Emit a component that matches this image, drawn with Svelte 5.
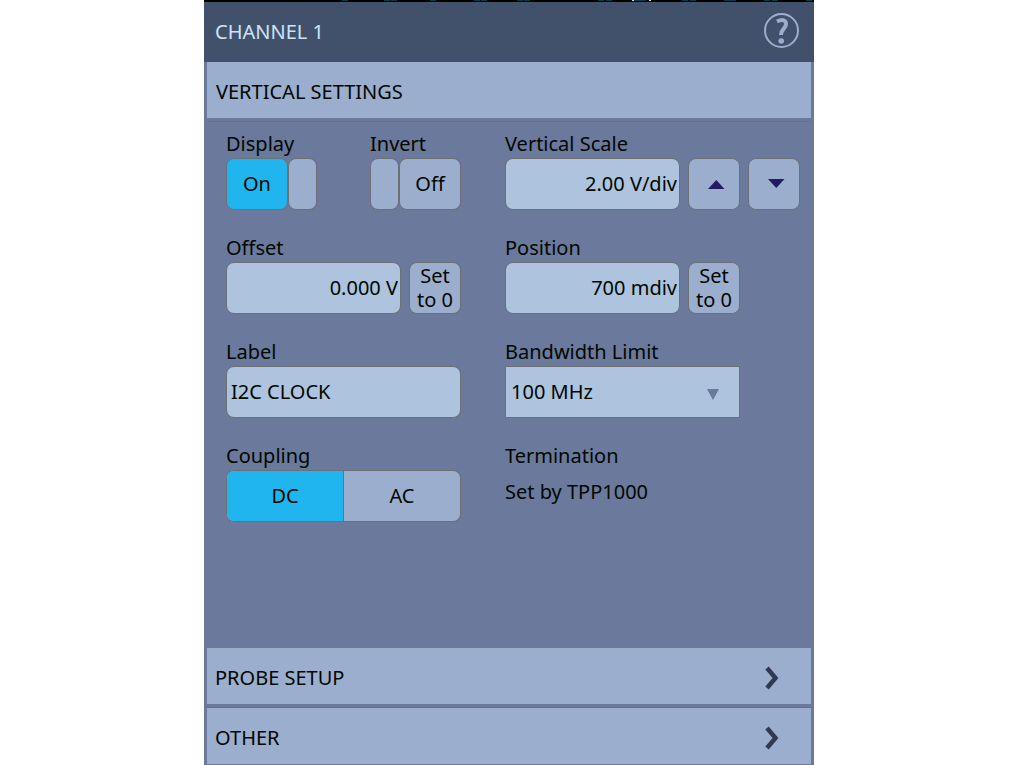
<script lang="ts">
    let display = true;
    let invert = false;
    let scale = "2.00 V/div";
    let offset = "0.000 V";
    let position = "700 mdiv";
    let label = "I2C CLOCK";
    let bandwidth = "100 MHz";
    let coupling = "DC";

    const bandwidths = ["20 MHz", "100 MHz", "250 MHz", "Full"];
    const sections = ["PROBE SETUP", "OTHER"];

    // bits of the graticule that show above the panel
    const ticks = [138, 180, 187, 226, 270, 277, 313, 320, 394, 402, 430, 436, 478, 486, 520, 526, 560, 568, 602];

    const steps = [1, 2, 5, 10];

    function stepScale(dir: number) {
        const now = steps.indexOf(parseFloat(scale));
        const next = Math.min(steps.length - 1, Math.max(0, now + dir));
        scale = steps[next].toFixed(2) + " V/div";
    }
</script>

<main>
    <section class="panel">
        <svg class="trace" viewBox="0 0 610 2" preserveAspectRatio="none" aria-hidden="true">
            {#each ticks as x}
                <rect {x} y="0" width="6" height="1" fill="#063c44" />
            {/each}
            <rect x="428" y="0" width="2" height="1" fill="#cfe0ee" />
            <rect x="445" y="0" width="2" height="1" fill="#cfe0ee" />
        </svg>

        <header>
            <h1>CHANNEL 1</h1>
            <button class="help" aria-label="Help">
                <svg width="36" height="36" viewBox="0 0 36 36" fill="none" stroke="#9caece">
                    <circle cx="17.500" cy="17.500" r="16.500" stroke-width="2" />
                    <path d="M13 8.500C18.500 5.800 22 7.200 22 11C22 15.500 17 16 17 22" stroke-width="4" />
                    <circle cx="17.200" cy="28" r="2.800" fill="#9caece" stroke="none" />
                </svg>
            </button>
        </header>

        <div class="content">
            <h2 class="bar">VERTICAL SETTINGS</h2>

            <div class="settings">
                <div class="toggles">
                    <div>
                        <label for="display">Display</label>
                        <button id="display" class="switch" role="switch" aria-checked={display} on:click={() => { display = !display; }}>
                            {#if display}
                                <span class="word on">On</span><span class="stub"></span>
                            {:else}
                                <span class="stub"></span><span class="word">Off</span>
                            {/if}
                        </button>
                    </div>
                    <div>
                        <label for="invert">Invert</label>
                        <button id="invert" class="switch" role="switch" aria-checked={invert} on:click={() => { invert = !invert; }}>
                            {#if invert}
                                <span class="word on">On</span><span class="stub"></span>
                            {:else}
                                <span class="stub"></span><span class="word">Off</span>
                            {/if}
                        </button>
                    </div>
                </div>

                <div>
                    <label for="scale">Vertical Scale</label>
                    <div class="row wide">
                        <input id="scale" class="box value" bind:value={scale} />
                        <button class="box" aria-label="Increase scale" on:click={() => stepScale(1)}>
                            <svg width="26" height="10" viewBox="0 0 26 10"><path d="M7 10L15.300 1L23.500 10Z" fill="#211c63" /></svg>
                        </button>
                        <button class="box" aria-label="Decrease scale" on:click={() => stepScale(-1)}>
                            <svg width="26" height="10" viewBox="0 0 26 10"><path d="M7 0H23.500L15.300 9Z" fill="#211c63" /></svg>
                        </button>
                    </div>
                </div>

                <div>
                    <label for="offset">Offset</label>
                    <div class="row">
                        <input id="offset" class="box value" bind:value={offset} />
                        <button class="box" on:click={() => { offset = "0.000 V"; }}>Set to&nbsp;0</button>
                    </div>
                </div>

                <div>
                    <label for="position">Position</label>
                    <div class="row wide">
                        <input id="position" class="box value" bind:value={position} />
                        <button class="box" on:click={() => { position = "0.00 div"; }}>Set to&nbsp;0</button>
                    </div>
                </div>

                <div>
                    <label for="label">Label</label>
                    <input id="label" class="box" bind:value={label} />
                </div>

                <div>
                    <label for="bandwidth">Bandwidth Limit</label>
                    <div class="row wide">
                        <div class="select">
                            <select id="bandwidth" class="box" bind:value={bandwidth}>
                                {#each bandwidths as item}
                                    <option>{item}</option>
                                {/each}
                            </select>
                            <svg width="12" height="11" viewBox="0 0 12 11"><path d="M0 0H12L6 11Z" fill="#6b799c" /></svg>
                        </div>
                    </div>
                </div>

                <fieldset>
                    <legend>Coupling</legend>
                    <div class="choices box">
                        {#each ["DC", "AC"] as item}
                            <label class:on={coupling === item}>
                                <input type="radio" name="coupling" value={item} bind:group={coupling} />
                                {item}
                            </label>
                        {/each}
                    </div>
                </fieldset>

                <div>
                    <h3>Termination</h3>
                    <p>Set by TPP1000</p>
                </div>
            </div>

            {#each sections as name}
                <button class="bar closed">
                    {name}
                    <svg width="14" height="24" viewBox="0 0 14 24"><path d="M2 2L10.500 12L2 22" fill="none" stroke="#313a52" stroke-width="4.500" /></svg>
                </button>
            {/each}
        </div>
    </section>
</main>

<style>
    :global(body) {
        background: white;
    }

    main {
        padding: 0 196px 0 204px;
    }

    main, button, input, select {
        font-family: "Noto Sans", "Open Sans", sans-serif;
        font-size: 20px;
        line-height: 24px;
        color: #000800;
    }

    main *, main {
        box-sizing: border-box;
    }

    h1, h2, h3, p, fieldset, legend {
        margin: 0;
        padding: 0;
        border: 0;
        font-size: 20px;
        font-weight: normal;
    }

    .panel {
        display: flex;
        flex-direction: column;
        min-height: 100vh;
        background: #6b799c;
    }

    .trace {
        display: block;
        width: 100%;
        height: 2px;
        background: black;
    }

    header {
        display: flex;
        align-items: center;
        justify-content: space-between;
        height: 60px;
        padding: 0 14px 0 11px;
        background: #42516b;
    }

    h1 {
        color: #cee3f7;
    }

    .help {
        padding: 0 0 2px;
        border: 0;
        background: none;
    }

    .help svg, .box svg {
        display: block;
        margin: 0 auto;
    }

    .content {
        flex: 1;
        display: flex;
        flex-direction: column;
        padding: 0 3px 1px;
    }

    .bar {
        display: flex;
        align-items: center;
        justify-content: space-between;
        height: 56px;
        padding: 4px 32px 0 9px;
        border: 0;
        border-radius: 0;
        background: #9caece;
        text-align: left;
    }

    .closed {
        padding-left: 8px;
    }

    .closed + .closed {
        height: 57px;
        margin-top: 3px;
        border-top: 1px solid #6b716b;
    }

    .settings {
        flex: 1;
        display: grid;
        grid-template-columns: 235fr 295fr;
        align-content: start;
        gap: 24px 44px;
        margin-top: 3px;
        padding: 8px 11px 24px 19px;
        border-top: 1px solid #6b717b;
    }

    label, legend, h3 {
        display: block;
        line-height: 28px;
    }

    .toggles {
        display: flex;
        justify-content: space-between;
    }

    .switch {
        display: flex;
        padding: 0;
        border: 0;
        background: none;
    }

    .box, .word, .stub {
        height: 52px;
        border: 1px solid #6b7173;
        border-radius: 8px;
        background: #9caece;
    }

    .word {
        width: 62px;
        line-height: 50px;
    }

    .stub {
        width: 29px;
    }

    .word.on, .choices .on {
        background: #21b5ef;
    }

    .row {
        display: grid;
        grid-template-columns: 1fr 52px;
        gap: 8px;
    }

    .wide {
        grid-template-columns: 1fr 52px 52px;
    }

    .box {
        display: block;
        width: 100%;
        min-width: 0;
        margin: 0;
        padding: 0;
    }

    input.box, select.box {
        padding: 0 4px 2px;
        background: #adc3de;
    }

    input.value {
        padding-right: 2px;
        text-align: right;
    }

    .select {
        position: relative;
        grid-column: span 2;
    }

    select.box {
        appearance: none;
        padding: 0 5px;
        border-radius: 0;
    }

    .select svg {
        position: absolute;
        top: 23px;
        right: 21px;
        pointer-events: none;
    }

    .choices {
        display: flex;
        overflow: hidden;
    }

    .choices label {
        flex: 1;
        line-height: 50px;
        text-align: center;
    }

    .choices label + label {
        border-left: 1px solid #6b7173;
    }

    .choices input {
        position: absolute;
        opacity: 0;
        pointer-events: none;
    }

    p {
        margin-top: 10px;
    }
</style>
